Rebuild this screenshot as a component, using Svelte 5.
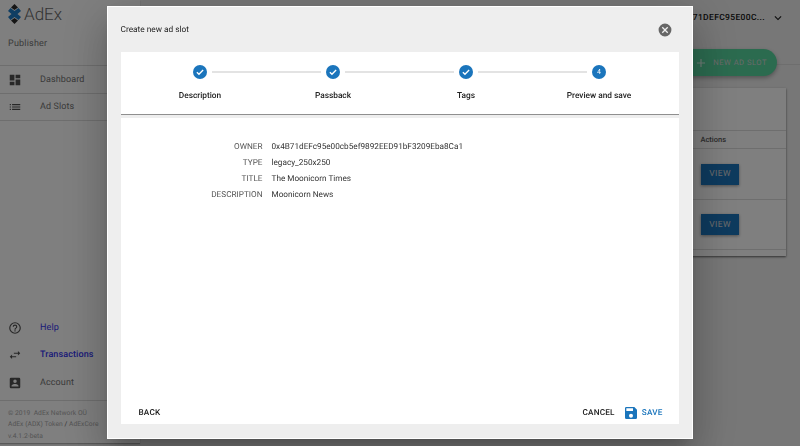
<script>
  const steps = [
    { label: 'Description', done: true },
    { label: 'Passback', done: true },
    { label: 'Tags', done: true },
    { label: 'Preview and save', done: false, n: 4 }
  ];
  const details = [
    ['OWNER', '0x4B71dEFc95e00cb5ef9892EED91bF3209Eba8Ca1'],
    ['TYPE', 'legacy_250x250'],
    ['TITLE', 'The Moonicorn Times'],
    ['DESCRIPTION', 'Moonicorn News']
  ];
</script>

<div class="app">
  <aside class="sidebar">
    <div class="brand">
      <div class="logo-row">
        <svg class="logo" viewBox="0 0 13 20" width="13" height="20">
          <path d="M6.500 0 10 3.500 6.500 6 3 3.500Z" fill="#2a2a2a" />
          <path d="M6.500 20 10 16.500 6.500 14 3 16.500Z" fill="#2a2a2a" />
          <path d="M2.500 4 6.500 7 10.500 4 13 7 9.500 10 13 13 10.500 16 6.500 13 2.500 16 0 13 3.500 10 0 7Z" fill="#1f7cc6" />
        </svg>
        <span class="wordmark">AdEx</span>
      </div>
      <div class="role">Publisher</div>
    </div>
    <nav class="nav">
      <div class="nav-item">
        <svg viewBox="0 0 24 24" width="14" height="14"><path d="M3 13h8V3H3zm0 8h8v-6H3zm10 0h8V11h-8zm0-18v6h8V3z" fill="#505050" /></svg>
        <span>Dashboard</span>
      </div>
      <div class="nav-item">
        <svg viewBox="0 0 24 24" width="14" height="14"><path d="M3 13h2v-2H3zm0 4h2v-2H3zm0-8h2V7H3zm4 4h14v-2H7zm0 4h14v-2H7zM7 7v2h14V7z" fill="#505050" /></svg>
        <span>Ad Slots</span>
      </div>
    </nav>
    <div class="spacer"></div>
    <nav class="nav-bottom">
      <div class="nav-item plain link">
        <svg viewBox="0 0 24 24" width="14" height="14"><path d="M11 18h2v-2h-2zm1-16a10 10 0 1 0 0 20 10 10 0 0 0 0-20zm0 18a8 8 0 1 1 0-16 8 8 0 0 1 0 16zm0-14a4 4 0 0 0-4 4h2a2 2 0 1 1 4 0c0 2-3 1.750-3 5h2c0-2.250 3-2.500 3-5a4 4 0 0 0-4-4z" fill="#505050" /></svg>
        <span>Help</span>
      </div>
      <div class="nav-item plain link strong">
        <svg viewBox="0 0 24 24" width="14" height="14"><path d="M6.990 11 3 15l3.990 4v-3H14v-2H6.990zM21 9l-3.990-4v3H10v2h7.010v3z" fill="#505050" /></svg>
        <span>Transactions</span>
      </div>
      <div class="nav-item plain">
        <svg viewBox="0 0 24 24" width="14" height="14"><path d="M3 5v14a2 2 0 0 0 2 2h14a2 2 0 0 0 2-2V5a2 2 0 0 0-2-2H5a2 2 0 0 0-2 2zm12 4a3 3 0 1 1-6 0 3 3 0 0 1 6 0zm-9 8c0-2 4-3.100 6-3.100s6 1.100 6 3.100v1H6z" fill="#505050" /></svg>
        <span>Account</span>
      </div>
    </nav>
    <footer class="side-foot">
      <div>© 2019&nbsp; AdEx Network OÜ</div>
      <div>AdEx (ADX) Token <b>/</b> AdExCore</div>
      <div>v.4.1.2-beta</div>
    </footer>
  </aside>

  <main class="main">
    <header class="topbar">
      <span class="account">0x4B71DEFC95E00C...</span>
      <svg class="chev" viewBox="0 0 24 24" width="14" height="14"><path d="M7.410 8.590 12 13.170l4.590-4.580L18 10l-6 6-6-6z" fill="#1c1c1c" /></svg>
    </header>
    <button class="fab">
      <svg viewBox="0 0 24 24" width="14" height="14"><path d="M19 13h-6v6h-2v-6H5v-2h6V5h2v6h6z" fill="#fff" /></svg>
      <span>NEW AD SLOT</span>
    </button>
    <section class="table-card">
      <div class="t-row head"><span>Actions</span></div>
      <div class="t-row"><button class="view">VIEW</button></div>
      <div class="t-row"><button class="view">VIEW</button></div>
    </section>
  </main>
</div>

<div class="overlay">
  <div class="modal">
    <div class="modal-head">
      <span class="modal-title">Create new ad slot</span>
      <svg class="close" viewBox="0 0 24 24" width="14" height="14"><path d="M12 1a11 11 0 1 0 0 22 11 11 0 0 0 0-22zm5.500 14.900-1.600 1.600L12 13.600l-3.900 3.900-1.600-1.600 3.900-3.900-3.900-3.900 1.600-1.600 3.900 3.900 3.900-3.900 1.600 1.600-3.900 3.900z" fill="#666" /></svg>
    </div>
    <div class="modal-card">
      <div class="stepper">
        {#each steps as s, i}
          <div class="step">
            <div class="step-head">
              <span class="line left" class:hide={i === 0}></span>
              <span class="dot">
                {#if s.done}
                  <svg viewBox="0 0 24 24" width="10" height="10"><path d="M4.500 12.500 9.500 17.500 19.500 7" fill="none" stroke="#fff" stroke-width="3.200" /></svg>
                {:else}
                  {s.n}
                {/if}
              </span>
              <span class="line right" class:hide={i === steps.length - 1}></span>
            </div>
            <div class="step-label">{s.label}</div>
          </div>
        {/each}
      </div>
      <div class="sep"></div>
      <div class="details">
        {#each details as d}
          <div class="d-label">{d[0]}</div>
          <div class="d-value">{d[1]}</div>
        {/each}
      </div>
      <div class="actions">
        <button class="txt back">BACK</button>
        <button class="txt cancel">CANCEL</button>
        <button class="txt save">
          <svg viewBox="3 3 18 18" width="12" height="12"><path d="M17 3H5a2 2 0 0 0-2 2v14a2 2 0 0 0 2 2h14a2 2 0 0 0 2-2V7zm-5 16a3 3 0 1 1 0-6 3 3 0 0 1 0 6zm3-10H5V5h10z" fill="#1b75bc" /></svg>
          <span>SAVE</span>
        </button>
      </div>
    </div>
  </div>
</div>

<style>
  :global(body) {
    margin: 0;
    font-family: Roboto, "Liberation Sans", sans-serif;
    overflow: hidden;
    text-rendering: geometricPrecision;
  }
  button {
    font-family: inherit;
    text-rendering: inherit;
    border: 0;
    background: none;
    padding: 0;
  }
  .app {
    display: flex;
    align-items: flex-start;
    height: 446px;
    background: #eee;
  }
  .sidebar {
    width: 140px;
    flex: none;
    display: flex;
    flex-direction: column;
    background: #fff;
    box-sizing: border-box;
    height: 443px;
    box-shadow: 0 1px 1px rgba(0, 0, 0, 0.25);
  }
  .brand {
    height: 65px;
    padding: 4px 0 0 8px;
    box-sizing: border-box;
  }
  .logo-row {
    display: flex;
    align-items: center;
    height: 20px;
  }
  .wordmark {
    font-weight: 300;
    font-size: 17px;
    color: #666;
    margin: 1px 0 0 3px;
  }
  .role {
    margin-top: 15px;
    font-size: 9px;
    color: #757575;
    letter-spacing: 0.2px;
  }
  .nav {
    border-top: 1px solid #ddd;
  }
  .nav-item {
    height: 27.500px;
    display: flex;
    align-items: center;
    box-sizing: border-box;
    padding: 1px 0 0 8px;
    font-size: 9px;
    letter-spacing: 0.1px;
    color: #757575;
    border-bottom: 1px solid #ddd;
  }
  .nav-item span {
    margin-left: 18px;
  }
  .nav-item.plain {
    border-bottom: 0;
  }
  .nav-item.link {
    color: #3535f0;
  }
  .nav-item.strong {
    font-weight: 500;
  }
  .spacer {
    flex: 1;
  }
  .nav-bottom {
    padding-bottom: 4px;
    border-bottom: 1px solid #ddd;
  }
  .side-foot {
    padding: 6.500px 8px 0;
    height: 42px;
    box-sizing: border-box;
    font-size: 6.700px;
    line-height: 11.500px;
    color: #aaa;
    letter-spacing: 0.05px;
  }
  .side-foot b {
    color: #555;
    font-weight: 400;
  }
  .main {
    flex: 1;
    position: relative;
    min-width: 0;
  }
  .topbar {
    height: 65px;
    box-sizing: border-box;
    border-bottom: 1px solid #ddd;
    display: flex;
    justify-content: flex-end;
    align-items: flex-start;
    padding: 11px 15px 0 0;
    gap: 6px;
  }
  .account {
    font-size: 8.500px;
    font-weight: 500;
    line-height: 14px;
    color: #111;
    letter-spacing: 0.35px;
  }
  .fab {
    position: absolute;
    left: 530px;
    top: 49px;
    width: 107px;
    height: 27px;
    border-radius: 14px;
    background: #57d69f;
    box-shadow: 0 2px 4px rgba(0, 0, 0, 0.3);
    color: #d5d5d5;
    font-size: 7.600px;
    font-weight: 400;
    letter-spacing: 0.5px;
    display: flex;
    align-items: center;
    justify-content: flex-end;
    gap: 5px;
    padding-right: 10px;
    box-sizing: border-box;
  }
  .fab svg {
    opacity: 0.8;
  }
  .table-card {
    margin: 23px 14px 0 0;
    height: 168px;
    background: #fff;
    box-sizing: border-box;
    padding-top: 42px;
    box-shadow: 0 1px 2px rgba(0, 0, 0, 0.6);
  }
  .t-row {
    height: 51px;
    border-top: 1px solid #ddd;
    box-sizing: border-box;
    display: flex;
    align-items: center;
    justify-content: flex-end;
    padding-right: 47px;
  }
  .t-row:last-child {
    border-bottom: 1px solid #ddd;
    height: 51px;
  }
  .t-row.head {
    height: 18px;
    font-size: 7.500px;
    font-weight: 500;
    color: #555;
    padding-right: 60px;
  }
  .view {
    width: 38px;
    height: 21px;
    background: #1b75bc;
    color: #d8d8d8;
    font-size: 8.500px;
    font-weight: 400;
    letter-spacing: 0.4px;
    box-shadow: 0 1px 3px rgba(0, 0, 0, 0.4);
  }
  .overlay {
    position: fixed;
    inset: 0;
    background: rgba(0, 0, 0, 0.5);
    display: flex;
    align-items: center;
    justify-content: center;
  }
  .modal {
    width: 586px;
    height: 433px;
    margin: 0 1px 1px 0;
    box-sizing: border-box;
    background: #eee;
    border: 1px solid #fff;
    display: flex;
    flex-direction: column;
    padding: 0 13px 14px;
    box-shadow: 0 11px 15px -7px rgba(0, 0, 0, 0.2), 0 24px 38px 3px rgba(0, 0, 0, 0.14), 0 9px 46px 8px rgba(0, 0, 0, 0.12);
  }
  .modal-head {
    height: 45px;
    flex: none;
    display: flex;
    align-items: center;
    justify-content: space-between;
  }
  .modal-title {
    font-size: 8.300px;
    color: #222;
  }
  .close {
    margin-right: 7px;
  }
  .modal-card {
    flex: 1;
    background: #fff;
    display: flex;
    flex-direction: column;
    min-height: 0;
  }
  .stepper {
    display: grid;
    grid-template-columns: repeat(4, 1fr);
    padding: 13px 13px 0;
    height: 63px;
    box-sizing: border-box;
    border-bottom: 1px solid #8f8f8f;
    flex: none;
  }
  .step-head {
    display: flex;
    align-items: center;
    height: 14px;
  }
  .line {
    flex: 1;
    height: 2px;
    background: #e3e3e3;
  }
  .line.left {
    margin-right: 5px;
  }
  .line.right {
    margin-left: 5px;
  }
  .line.hide {
    visibility: hidden;
  }
  .dot {
    width: 14px;
    height: 14px;
    border-radius: 50%;
    background: #1b75bc;
    color: #fff;
    font-size: 7px;
    display: flex;
    align-items: center;
    justify-content: center;
  }
  .step-label {
    margin-top: 12px;
    text-align: center;
    font-size: 8.300px;
    font-weight: 500;
    color: #222;
  }
  .sep {
    height: 3px;
    background: #eee;
    flex: none;
  }
  .details {
    display: grid;
    grid-template-columns: 142px 1fr;
    column-gap: 9px;
    grid-auto-rows: 16px;
    align-items: center;
    padding-top: 21px;
    font-size: 8.200px;
  }
  .d-label {
    text-align: right;
    color: #555;
  }
  .d-value {
    color: #333;
  }
  .actions {
    margin-top: auto;
    height: 17px;
    display: flex;
    align-items: flex-start;
    padding: 0 16px 0 18px;
  }
  .txt {
    font-size: 8.200px;
    font-weight: 500;
    letter-spacing: 0.2px;
    color: #222;
    line-height: 12px;
  }
  .back {
    margin-right: auto;
  }
  .save {
    margin-left: 10px;
    color: #1b75bc;
    display: flex;
    align-items: center;
    gap: 5px;
  }
</style>
